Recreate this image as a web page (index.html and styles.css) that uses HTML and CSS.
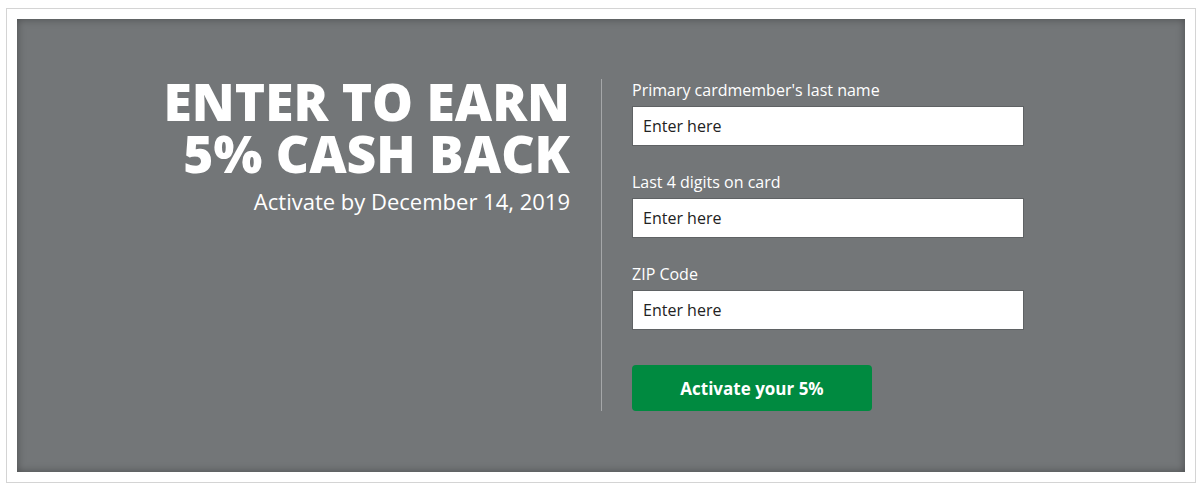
FILE: index.html
```html
<!DOCTYPE html>
<html lang="en">
<head>
    <meta charset="UTF-8">
    <meta name="viewport" content="width=device-width, initial-scale=1.0">
    <title>Enter to Earn 5% Cash Back</title>
    <link rel="stylesheet" href="styles.css">
</head>
<body>

    <!-- Outer frame -->
    <div class="frame">
        <div class="promo">

            <!-- Offer headline -->
            <div class="promo-offer">
                <h1>ENTER TO EARN<br>5% CASH BACK</h1>
                <p class="deadline">Activate by December 14, 2019</p>
            </div>

            <!-- Activation form -->
            <form class="promo-form" onsubmit="return false">
                <div class="field">
                    <label for="last-name">Primary cardmember's last name</label>
                    <input type="text" id="last-name" placeholder="Enter here">
                </div>
                <div class="field">
                    <label for="last-four">Last 4 digits on card</label>
                    <input type="text" id="last-four" placeholder="Enter here">
                </div>
                <div class="field">
                    <label for="zip">ZIP Code</label>
                    <input type="text" id="zip" placeholder="Enter here">
                </div>
                <button type="submit" class="activate-btn">Activate your 5%</button>
            </form>

        </div>
    </div>

</body>
</html>
```

FILE: styles.css
```css
/* Page */
body {
    margin: 8px 0 0 6px;
    font-family: "Open Sans", "Liberation Sans", sans-serif;
    background-color: #fff;
}

.frame {
    width: 1168px;
    padding: 10px;
    border: 1px solid #d4d4d4;
}

/* Grey promo panel */
.promo {
    display: grid;
    grid-template-columns: 1fr 1fr;
    padding: 60px 0 61px;
    background-color: #737678;
    box-shadow: inset 0 0 8px rgba(0, 0, 0, 0.35);
}

/* Left column */
.promo-offer {
    padding-right: 31px;
    text-align: right;
    color: #fff;
}

.promo-offer h1 {
    margin: -4px 0 0;
    font-size: 51.5px;
    font-weight: 800;
    line-height: 52px;
}

.deadline {
    margin: 8px 0 0;
    font-size: 22px;
    line-height: 28px;
}

/* Right column */
.promo-form {
    display: flex;
    flex-direction: column;
    gap: 25px;
    padding-left: 30px;
    border-left: 1px solid #a5a7a9;
}

.field {
    display: flex;
    flex-direction: column;
    gap: 5px;
}

.field label {
    color: #fff;
    font-size: 16px;
    line-height: 22px;
}

.field input {
    box-sizing: border-box;
    width: 392px;
    height: 40px;
    padding: 0 10px;
    border: 1px solid #5f6264;
    border-radius: 0;
    background-color: #fff;
    font-family: inherit;
    font-size: 16px;
    color: #222;
}

.field input::placeholder {
    color: #222;
    opacity: 1;
}

.activate-btn {
    width: 240px;
    height: 46px;
    margin-top: 10px;
    border: none;
    border-radius: 4px;
    background-color: #008a40;
    color: #fff;
    font-family: inherit;
    font-size: 17px;
    font-weight: 700;
    cursor: pointer;
}

.activate-btn:hover {
    background-color: #007a38;
}
```
